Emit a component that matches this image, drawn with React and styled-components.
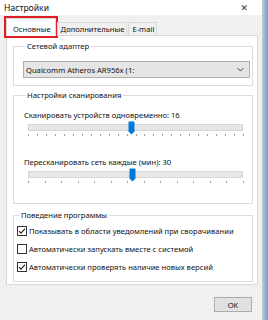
import React from 'react'
import styled, {createGlobalStyle} from 'styled-components'

const Global = createGlobalStyle`
    html, body {
        margin: 0;
        padding: 0;
        background: #f0f0f0;
    }
    body {
        font-family: "Noto Sans", "Open Sans", sans-serif;
        font-size: 7.6px;
        color: #111;
    }
`

function Thumb() {
    return (
        <svg width="7" height="14" viewBox="0 0 7 14">
            <path d="M0.5 1 Q0.5 0.5 1 0.5 L6 0.5 Q6.5 0.5 6.5 1 L6.5 10.5 L3.5 13.5 L0.5 10.5 Z" fill="#0078d7" />
        </svg>
    )
}

function Slider({value, ticks}) {
    const marks = []
    for (let i = 0; i <= ticks; i++) {
        marks.push(<Tick key={i} style={{left: `${(i / ticks) * 100}%`}} />)
    }
    return (
        <SliderBox>
            <Track />
            <ThumbWrap style={{left: `${value * 100}%`}}>
                <Thumb />
            </ThumbWrap>
            <Ticks>{marks}</Ticks>
        </SliderBox>
    )
}

function Check({checked}) {
    return (
        <Box>
            {checked && (
                <svg width="8" height="8" viewBox="0 0 8 8">
                    <path d="M1 4.2 L3 6.2 L7 1.6" stroke="#222" strokeWidth="1.1" fill="none" />
                </svg>
            )}
        </Box>
    )
}

function App() {
    return (
        <Screen>
            <Global />
            <Window>
                <TitleBar>
                    <span>Настройки</span>
                    <Close>✕</Close>
                </TitleBar>
                <Body>
                    <Tabs>
                        <Tab active>Основные</Tab>
                        <Tab>Дополнительные</Tab>
                        <Tab>E-mail</Tab>
                    </Tabs>
                    <Panel>
                        <Group>
                            <Legend>Сетевой адаптер</Legend>
                            <Select>
                                <span>Qualcomm Atheros AR956x (1:</span>
                                <svg width="7" height="5" viewBox="0 0 7 5">
                                    <path d="M0.5 1 L3.5 4 L6.5 1" stroke="#444" strokeWidth="1" fill="none" />
                                </svg>
                            </Select>
                        </Group>
                        <Group gap={3} pb={17}>
                            <Legend>Настройки сканирования</Legend>
                            <Label>Сканировать устройств одновременно: 16</Label>
                            <Slider value={0.48} ticks={24} />
                            <Label top={17}>Пересканировать сеть каждые (мин): 30</Label>
                            <Slider value={0.485} ticks={13} />
                        </Group>
                        <Group gap={5} pb={5} pl={3}>
                            <Legend>Поведение программы</Legend>
                            <Checks>
                                <CheckRow>
                                    <Check checked />
                                    Показывать в области уведомлений при сворачивании
                                </CheckRow>
                                <CheckRow>
                                    <Check />
                                    Автоматически запускать вместе с системой
                                </CheckRow>
                                <CheckRow>
                                    <Check checked />
                                    Автоматически проверять наличие новых версий
                                </CheckRow>
                            </Checks>
                        </Group>
                    </Panel>
                    <Footer>
                        <Button>OK</Button>
                    </Footer>
                </Body>
            </Window>
            <Strip />
        </Screen>
    )
}

export default App

const Screen = styled.div`
    display: flex;
    width: 268px;
    height: 320px;
    overflow: hidden;
`

const Window = styled.div`
    width: 262px;
    display: flex;
    flex-direction: column;
    background: #f0f0f0;
    border-right: 1px solid #c4c4c4;
`

const Strip = styled.div`
    flex: 1;
    background: linear-gradient(90deg, #a9c6e4, #6f9fd2);
`

const TitleBar = styled.div`
    height: 15px;
    background: #fff;
    display: flex;
    align-items: center;
    justify-content: space-between;
    padding: 0 14px 0 4px;
    font-size: 8.6px;
`

const Close = styled.span`
    font-family: "DejaVu Sans", sans-serif;
    font-size: 9px;
    color: #333;
`

const Body = styled.div`
    padding: 3px 4px 0 6px;
    display: flex;
    flex-direction: column;
`

const Tabs = styled.div`
    display: flex;
    align-items: flex-end;
    height: 18px;
    position: relative;
    z-index: 1;
    margin-bottom: -1px;
`

const Tab = styled.div`
    height: ${p => (p.active ? 18 : 14)}px;
    box-sizing: border-box;
    padding: ${p => (p.active ? 2 : 0)}px ${p => (p.active ? 4 : 2)}px 0 ${p => (p.active ? 6 : 3)}px;
    margin-left: ${p => (p.active ? 0 : 1)}px;
    display: flex;
    align-items: center;
    background: ${p => (p.active ? '#fff' : '#f0f0f0')};
    border: 1px solid #d9d9d9;
    border-bottom: ${p => (p.active ? 'none' : '1px solid #d9d9d9')};
    outline: ${p => (p.active ? '2.5px solid #dc1f24' : 'none')};
`

const Panel = styled.div`
    background: #fff;
    border: 1px solid #d9d9d9;
    height: 250px;
    box-sizing: border-box;
    padding: 4px 4px 2px 6px;
    display: flex;
    flex-direction: column;
`

const Group = styled.fieldset`
    margin: ${p => p.gap || 0}px 0 0 0;
    border: 1px solid #dcdcdc;
    padding: 0 2px ${p => p.pb || 7}px ${p => p.pl || 9}px;
    min-width: 0;
`

const Legend = styled.legend`
    padding: 0 2px;
    margin-left: 2px;
    line-height: 12px;
`

const Select = styled.div`
    margin-top: 9px;
    height: 15px;
    background: #e5e5e5;
    border: 1px solid #adadad;
    display: flex;
    align-items: center;
    justify-content: space-between;
    padding: 0 5px 0 2px;
    white-space: nowrap;
`

const Label = styled.div`
    margin-top: ${p => p.top || 8}px;
    line-height: 12px;
    padding-left: 1px;
`

const SliderBox = styled.div`
    position: relative;
    height: 18px;
    margin: 0 7px 0 5px;
`

const Track = styled.div`
    position: absolute;
    top: 3px;
    left: 0;
    right: 0;
    height: 5px;
    background: #e7e7e7;
    border: 1px solid #d6d6d6;
`

const ThumbWrap = styled.div`
    position: absolute;
    top: 0;
    margin-left: -3px;
    line-height: 0;
`

const Ticks = styled.div`
    position: absolute;
    top: 13px;
    left: 0;
    right: 0;
    height: 2px;
`

const Tick = styled.span`
    position: absolute;
    top: 0;
    width: 1px;
    height: 2px;
    background: #a0a0a0;
`

const Checks = styled.div`
    display: flex;
    flex-direction: column;
    padding-top: 1px;
`

const CheckRow = styled.div`
    height: 18px;
    display: flex;
    align-items: center;
    gap: 2px;
    white-space: nowrap;
`

const Box = styled.span`
    width: 10px;
    height: 10px;
    box-sizing: border-box;
    border: 1px solid #333;
    background: #fff;
    display: flex;
    align-items: center;
    justify-content: center;
`

const Footer = styled.div`
    display: flex;
    justify-content: flex-end;
    padding: 12px 6px 0 0;
`

const Button = styled.div`
    width: 38px;
    height: 15px;
    box-sizing: border-box;
    background: #e1e1e1;
    border: 1px solid #adadad;
    display: flex;
    align-items: center;
    justify-content: center;
`
